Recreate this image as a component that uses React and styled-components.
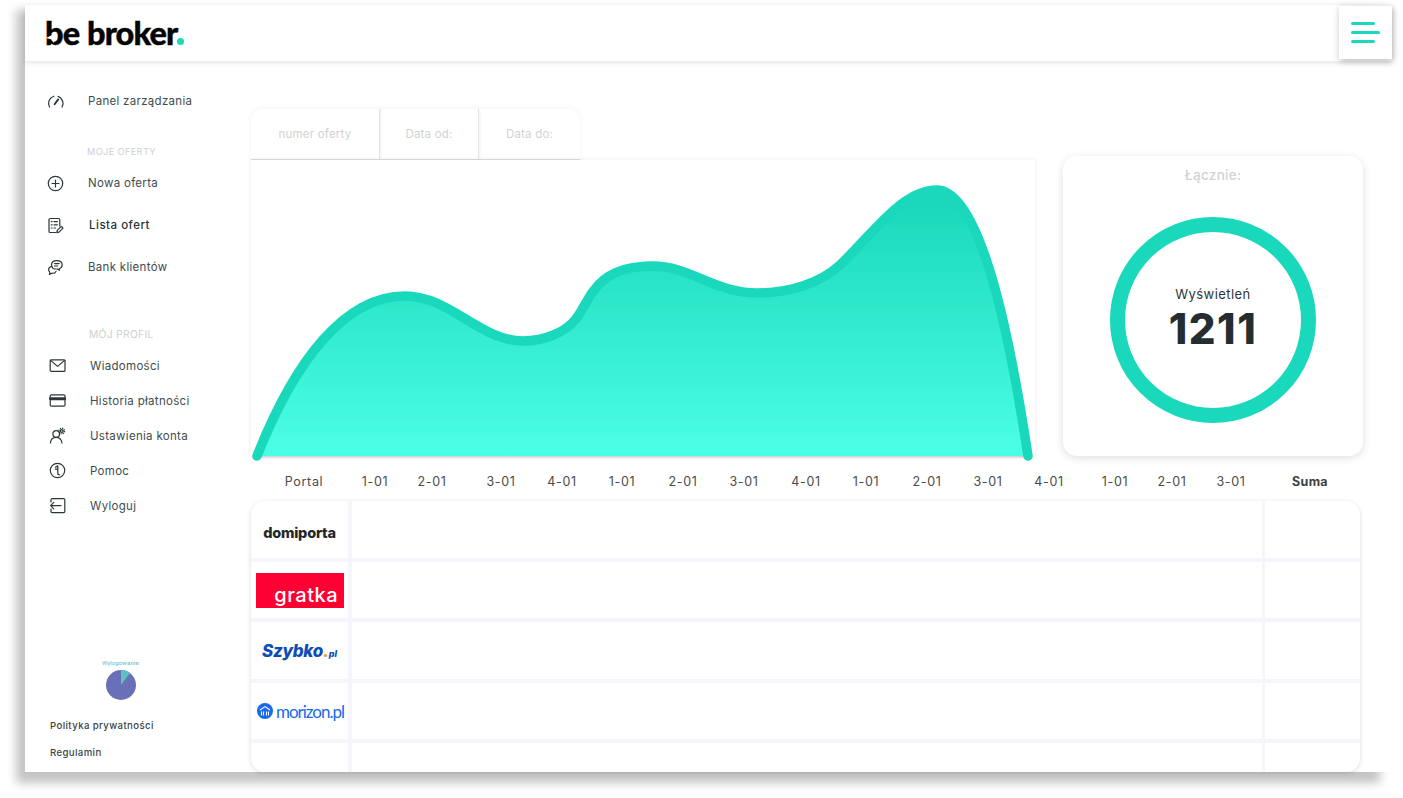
import React from "react";
import styled, { createGlobalStyle } from "styled-components";

const GlobalStyle = createGlobalStyle`
  html {
    background: #fff;
  }
  body {
    margin: 0;
    padding: 0;
    overflow: hidden;
  }
  * {
    box-sizing: border-box;
  }
`;

const TEAL = "#19d8bb";
const INK = "#2a3638";
const FONT = `Inter, "Noto Sans", sans-serif`;
const AXIS_COLUMNS = "106px 36px 78px 60px 62px 58px 64px 58px 66px 54px 68px 54px 68px 64px 50px 68px 90px";

const Page = styled.div`
  width: 1403px;
  height: 798px;
  padding: 5px 0 0 25px;
  font-family: ${FONT};
  color: ${INK};
`;

const Frame = styled.div`
  position: relative;
  width: 1378px;
  height: 767px;
  background: #fff;
  display: flex;
  flex-direction: column;

  /* the soft shadow only shows on the left and below */
  &::before {
    content: "";
    position: absolute;
    z-index: -1;
    top: 5px;
    left: -9px;
    right: 23px;
    bottom: -11px;
    background: #c4c4c4;
    filter: blur(5px);
  }
`;

const Header = styled.header`
  width: 1367px;
  height: 56px;
  flex: none;
  display: flex;
  align-items: center;
  justify-content: space-between;
  padding-left: 20px;
  box-shadow: 0 2px 5px rgba(0, 0, 0, 0.1);
`;

const Logo = styled.div`
  position: relative;
  display: flex;
  align-items: baseline;
  font-family: Lato, "Noto Sans", sans-serif;
  font-weight: 900;
  font-size: 32.5px;
  line-height: 40px;
  letter-spacing: -0.9px;
  word-spacing: 1px;
  -webkit-text-stroke: 0.4px #050505;
  color: #050505;
`;

const LogoDot = styled.span`
  width: 7px;
  height: 7px;
  margin-left: 0;
  border-radius: 50%;
  background: ${TEAL};
`;

const LogoArrow = styled.svg`
  position: absolute;
  left: 1px;
  top: 19px;
  width: 12px;
  height: 12px;
`;

const MenuButton = styled.button`
  width: 53px;
  height: 53px;
  margin-top: -1px;
  border: 0;
  padding: 0 0 0 12px;
  background: #fff;
  box-shadow: 1px 2px 7px rgba(0, 0, 0, 0.28);
  display: flex;
  flex-direction: column;
  align-items: flex-start;
  justify-content: center;
  gap: 5.5px;
`;

const MenuBar = styled.span`
  display: block;
  width: ${(p) => p.$width}px;
  height: 3.5px;
  border-radius: 2px;
  background: ${TEAL};
`;

const Body = styled.div`
  flex: 1;
  min-height: 0;
  display: flex;
`;

const Sidebar = styled.nav`
  width: 226px;
  flex: none;
  display: flex;
  flex-direction: column;
  padding: 25px 0 6px 23px;
`;

const NavGroup = styled.div`
  display: flex;
  flex-direction: column;
  margin-top: ${(p) => p.$top || 0}px;
  margin-left: ${(p) => p.$left || 0}px;
`;

const NavItem = styled.a`
  height: ${(p) => p.$height}px;
  display: flex;
  align-items: center;
  font-size: 11.5px;
  letter-spacing: 0.3px;
  color: #414c4e;
  font-weight: ${(p) => (p.$active ? 500 : 400)};
  ${(p) => p.$active && `color: #2a3436; letter-spacing: 0.5px;`}
`;

const IconSlot = styled.span`
  width: ${(p) => (p.$active ? 41 : 40)}px;
  flex: none;
  display: flex;
  align-items: center;
`;

const NavIcon = styled.svg`
  width: 17px;
  height: 17px;
  margin-left: -1px;
  fill: none;
  stroke: ${INK};
  stroke-width: 1.2;
  stroke-linecap: round;
  stroke-linejoin: round;
`;

const SectionLabel = styled.div`
  height: 14px;
  line-height: 14px;
  margin-top: ${(p) => p.$top}px;
  padding-left: ${(p) => p.$left}px;
  font-size: ${(p) => p.$size}px;
  letter-spacing: 0.3px;
  color: #cfcfcf;
  white-space: nowrap;
`;

const PieBlock = styled.div`
  margin-top: auto;
  width: 146px;
  display: flex;
  flex-direction: column;
  align-items: center;
`;

const PieLabel = styled.div`
  font-family: Roboto, sans-serif;
  font-size: 6.2px;
  line-height: 8px;
  color: #59c2c8;
`;

const PieChart = styled.svg`
  width: 32px;
  height: 32px;
  margin-top: 2px;
  margin-bottom: 11px;
`;

const FooterLink = styled.a`
  height: 27px;
  display: flex;
  align-items: center;
  padding-left: 2px;
  font-size: 9.6px;
  font-weight: 500;
  letter-spacing: 0.4px;
  color: #3a4446;
`;

const Main = styled.main`
  flex: 1;
  min-width: 0;
  display: flex;
  flex-direction: column;
  padding-top: 48px;
`;

const TopRow = styled.section`
  display: flex;
  gap: 28px;
  align-items: flex-start;
`;

const ChartColumn = styled.div`
  width: 784px;
  display: flex;
  flex-direction: column;
`;

const Filters = styled.div`
  width: 329px;
  height: 51px;
  display: flex;
  border-radius: 12px 12px 0 0;
  background: #fff;
  border-bottom: 1px solid #dedede;
  box-shadow: 0 -1px 6px rgba(0, 0, 0, 0.05);
  overflow: hidden;
`;

const FilterCell = styled.div`
  width: ${(p) => p.$width}px;
  display: flex;
  align-items: center;
  justify-content: center;
  font-size: 11.5px;
  letter-spacing: 0.2px;
  color: #d2d2d2;
  ${(p) => !p.$last && `border-right: 1px solid #e4e4e4; box-shadow: 1px 0 3px rgba(0, 0, 0, 0.06);`}
`;

const ChartCard = styled.div`
  height: 296px;
  background: #fff;
  box-shadow: 0 0 5px rgba(0, 0, 0, 0.09);
`;

const ChartSvg = styled.svg`
  display: block;
  width: 784px;
  height: 296px;
  overflow: visible;
`;

const TotalCard = styled.aside`
  width: 300px;
  height: 300px;
  margin-top: 47px;
  border-radius: 14px;
  background: #fff;
  box-shadow: 0 2px 8px rgba(0, 0, 0, 0.13);
  display: flex;
  flex-direction: column;
  align-items: center;
`;

const TotalTitle = styled.div`
  margin-top: 10px;
  height: 18px;
  line-height: 18px;
  font-size: 13.5px;
  font-weight: 500;
  letter-spacing: 0.3px;
  color: #d2d2d2;
`;

const Ring = styled.div`
  width: 206px;
  height: 206px;
  margin-top: 33px;
  border: 15px solid ${TEAL};
  border-radius: 50%;
  display: flex;
  flex-direction: column;
  align-items: center;
`;

const RingLabel = styled.div`
  margin-top: 53px;
  height: 18px;
  line-height: 18px;
  font-size: 13px;
  letter-spacing: 0.45px;
  color: #2c3638;
`;

const RingValue = styled.div`
  margin-top: 2px;
  font-size: 42px;
  line-height: 48px;
  font-weight: 800;
  letter-spacing: 1.5px;
  color: #242e30;
`;

const AxisRow = styled.div`
  display: grid;
  grid-template-columns: ${AXIS_COLUMNS};
  height: 26px;
  margin-top: 12px;
  align-items: center;
`;

const AxisLabel = styled.div`
  text-align: center;
  font-size: 12.5px;
  letter-spacing: 0.7px;
  font-weight: ${(p) => (p.$bold ? 700 : 400)};
  color: ${(p) => (p.$bold ? "#3f3f3f" : "#4a4a4a")};
  ${(p) => p.$bold && `letter-spacing: 0.3px;`}
`;

const Table = styled.div`
  width: 1109px;
  height: 271px;
  margin-top: 7px;
  border-radius: 14px;
  overflow: hidden;
  background: #f5f5fb;
  display: grid;
  grid-template-columns: 97px 910px 95px;
  grid-template-rows: 57px 56px 57px 56px 29px;
  gap: 4px 3.5px;
  box-shadow: 0 1px 5px rgba(0, 0, 0, 0.14);
`;

const TableCell = styled.div`
  background: #fff;
`;

const LogoCell = styled(TableCell)`
  display: flex;
  align-items: center;
  justify-content: center;
  overflow: hidden;
`;

const Domiporta = styled.span`
  margin-top: 5px;
  font-weight: 800;
  font-size: 14.5px;
  letter-spacing: -0.2px;
  color: #25282b;
`;

const Gratka = styled.div`
  width: 88px;
  height: 35px;
  margin-left: 1px;
  margin-top: 1px;
  background: #ff0033;
  overflow: hidden;
  display: flex;
  justify-content: flex-end;
  padding-right: 6px;
  font-weight: 500;
  font-size: 20px;
  line-height: 44px;
  letter-spacing: 0.5px;
  color: #fff;
`;

const Szybko = styled.span`
  font-style: italic;
  font-weight: 800;
  font-size: 17px;
  letter-spacing: -0.3px;
  color: #0d4cb8;
`;

const SzybkoDot = styled.span`
  color: #f59a23;
`;

const SzybkoTld = styled.span`
  font-size: 9px;
  letter-spacing: 0;
`;

const Morizon = styled.span`
  display: flex;
  align-items: center;
  gap: 3px;
  margin-left: 2px;
  font-family: Lato, sans-serif;
  font-size: 17px;
  letter-spacing: -1px;
  color: #1769f0;
`;

const MorizonMark = styled.svg`
  width: 16px;
  height: 16px;
  flex: none;
`;

const axisLabels = [
  "1-01", "2-01", "3-01", "4-01",
  "1-01", "2-01", "3-01", "4-01",
  "1-01", "2-01", "3-01", "4-01",
  "1-01", "2-01", "3-01",
];

const curve =
  "M6 296 C44 200 94 136 154 136 C199 136 229 181 272 181 C294 181 314 172 324 160 C339 143 341 106 402 106 C439 106 464 133 506 133 C539 133 569 123 589 105 C625 70 652 30 686 30 C734 30 764 210 777 296";

const icons = {
  gauge: (
    <>
      <path d="M2.600 14A7.400 7.400 0 0 1 6.800 3.200" />
      <path d="M11 3.400A7.400 7.400 0 0 1 15 14" />
      <path d="M7.600 11.200 11.200 6.400" strokeWidth="1.900" />
    </>
  ),
  plus: (
    <>
      <circle cx="8.500" cy="8.500" r="7.200" />
      <path d="M8.500 5v7M5 8.500h7" />
    </>
  ),
  list: (
    <>
      <path d="M12.800 9V2.800a1.300 1.300 0 0 0-1.300-1.300H3.300A1.300 1.300 0 0 0 2 2.800v11.400a1.300 1.300 0 0 0 1.300 1.300h5.400" />
      <path d="M4.300 4.600h.8M7 4.600h3.400M4.300 7.800h.8M7 7.800h3.400M4.300 11h.8M7 11h1.600" />
      <path d="M9.800 15.600l.4-2.200 4-4 1.800 1.800-4 4z" />
    </>
  ),
  chat: (
    <>
      <path d="M4.600 5.200C4.900 2.900 7 1.600 9.600 1.600c3 0 5.600 1.500 5.600 4.200 0 2-1.300 3.300-3 3.900l.3 1.600-2.200-1.300H8c-2 0-3.500-1.600-3.400-4.800z" />
      <path d="M7.600 4.600h4.600M7.600 7h3" />
      <path d="M4.400 7.200C2.700 7.800 1.600 9 1.600 10.600c0 1.100.5 2 1.300 2.600l-.5 2.200 2.600-1.200c1.700.2 3.300-.4 4-1.800" />
    </>
  ),
  mail: (
    <>
      <rect x="1.200" y="2.800" width="14.800" height="11.600" rx="1" />
      <path d="M1.600 3.400 8.600 9.400l7-6" />
    </>
  ),
  card: (
    <>
      <rect x="1.200" y="2.800" width="14.800" height="11.400" rx="1.200" />
      <path d="M1.400 6.700h14.400" strokeWidth="3" />
    </>
  ),
  user: (
    <>
      <circle cx="7.200" cy="7" r="3.300" />
      <path d="M1.400 16c.4-3.400 2.500-5.600 5.800-5.600s5.200 2 5.800 5.600" />
      <circle cx="12.800" cy="4" r="1.400" fill="#fff" strokeWidth="1.400" />
      <circle cx="12.800" cy="4" r="2.800" strokeWidth="1.200" strokeDasharray="1.200 1" strokeLinecap="butt" />
    </>
  ),
  info: (
    <>
      <circle cx="8.500" cy="8.500" r="7.200" />
      <path d="M6.400 5.200 8.800 3.900v7.600c0 .9.500 1.300 1.700 1.300" />
      <path d="M6.400 7.200h2.200" />
    </>
  ),
  logout: (
    <>
      <path d="M2 5V2.800c0-.7.500-1.200 1.200-1.200h11.400c.7 0 1.200.5 1.200 1.200v11.600c0 .7-.5 1.200-1.200 1.200H3.200c-.7 0-1.200-.5-1.200-1.200V12" />
      <path d="M12 8.600H1.600M4.800 5.400 1.600 8.600l3.200 3.200" />
    </>
  ),
};

const Icon = ({ name }) => <NavIcon viewBox="0 0 17 17">{icons[name]}</NavIcon>;

const Item = ({ icon, label, height, active }) => (
  <NavItem $height={height} $active={active}>
    <IconSlot $active={active}>
      <Icon name={icon} />
    </IconSlot>
    {label}
  </NavItem>
);

const App = () => {
  return (
    <Page>
      <GlobalStyle />
      <Frame>
        <Header>
          <Logo>
            be broker
            <LogoDot />
            <LogoArrow viewBox="0 0 12 12">
              <path d="M0 6 10 1 8 11 5.500 7.500z" fill="#fff" />
            </LogoArrow>
          </Logo>
          <MenuButton>
            <MenuBar $width={24} />
            <MenuBar $width={29} />
            <MenuBar $width={24} />
          </MenuButton>
        </Header>
        <Body>
          <Sidebar>
            <Item icon="gauge" label="Panel zarządzania" height={30} />
            <SectionLabel $top={29} $left={39} $size={9.3}>MOJE OFERTY</SectionLabel>
            <NavGroup $top={3}>
              <Item icon="plus" label="Nowa oferta" height={42} />
              <Item icon="list" label="Lista ofert" height={42} active />
              <Item icon="chat" label="Bank klientów" height={42} />
            </NavGroup>
            <SectionLabel $top={39} $left={41} $size={10.3}>MÓJ PROFIL</SectionLabel>
            <NavGroup $top={7} $left={2}>
              <Item icon="mail" label="Wiadomości" height={35} />
              <Item icon="card" label="Historia płatności" height={35} />
              <Item icon="user" label="Ustawienia konta" height={35} />
              <Item icon="info" label="Pomoc" height={35} />
              <Item icon="logout" label="Wyloguj" height={35} />
            </NavGroup>
            <PieBlock>
              <PieLabel>Wylogowanie:</PieLabel>
              <PieChart viewBox="0 0 32 32">
                <circle cx="16" cy="16" r="15" fill="#6a70b8" />
                <path d="M16 16V1A15 15 0 0 1 25 4z" fill="#5fc0c0" />
              </PieChart>
            </PieBlock>
            <FooterLink>Polityka prywatności</FooterLink>
            <FooterLink>Regulamin</FooterLink>
          </Sidebar>
          <Main>
            <TopRow>
              <ChartColumn>
                <Filters>
                  <FilterCell $width={129}>numer oferty</FilterCell>
                  <FilterCell $width={99}>Data od:</FilterCell>
                  <FilterCell $width={101} $last>Data do:</FilterCell>
                </Filters>
                <ChartCard>
                  <ChartSvg viewBox="0 0 784 296">
                    <defs>
                      <linearGradient id="area" x1="0" y1="0" x2="0" y2="1">
                        <stop offset="0" stopColor="#19d6b8" />
                        <stop offset="1" stopColor="#4bffe5" />
                      </linearGradient>
                      <filter id="lift" x="-5%" y="-5%" width="110%" height="110%">
                        <feDropShadow dx="0" dy="1" stdDeviation="1.500" floodColor="#000" floodOpacity="0.22" />
                      </filter>
                    </defs>
                    <path d={curve + "Z"} fill="url(#area)" filter="url(#lift)" />
                    <path d={curve} fill="none" stroke="#19d8bb" strokeWidth="9.500" strokeLinecap="round" />
                  </ChartSvg>
                </ChartCard>
              </ChartColumn>
              <TotalCard>
                <TotalTitle>Łącznie:</TotalTitle>
                <Ring>
                  <RingLabel>Wyświetleń</RingLabel>
                  <RingValue>1211</RingValue>
                </Ring>
              </TotalCard>
            </TopRow>
            <AxisRow>
              <AxisLabel>Portal</AxisLabel>
              {axisLabels.map((label, i) => (
                <AxisLabel key={i}>{label}</AxisLabel>
              ))}
              <AxisLabel $bold>Suma</AxisLabel>
            </AxisRow>
            <Table>
              <LogoCell><Domiporta>domiporta</Domiporta></LogoCell>
              <TableCell />
              <TableCell />
              <LogoCell><Gratka>gratka</Gratka></LogoCell>
              <TableCell />
              <TableCell />
              <LogoCell>
                <Szybko>Szybko<SzybkoDot>.</SzybkoDot><SzybkoTld>pl</SzybkoTld></Szybko>
              </LogoCell>
              <TableCell />
              <TableCell />
              <LogoCell>
                <Morizon>
                  <MorizonMark viewBox="0 0 16 16">
                    <circle cx="8" cy="8" r="8" fill="#1769f0" />
                    <path d="M3 7 8 3.600 13 7M4.500 8.500v4M6.500 8.500v4M9.500 8.500v4M11.500 8.500v4" fill="none" stroke="#fff" strokeWidth="1.100" />
                  </MorizonMark>
                  morizon.pl
                </Morizon>
              </LogoCell>
              <TableCell />
              <TableCell />
              <TableCell />
              <TableCell />
              <TableCell />
            </Table>
          </Main>
        </Body>
      </Frame>
    </Page>
  );
};

export default App;
